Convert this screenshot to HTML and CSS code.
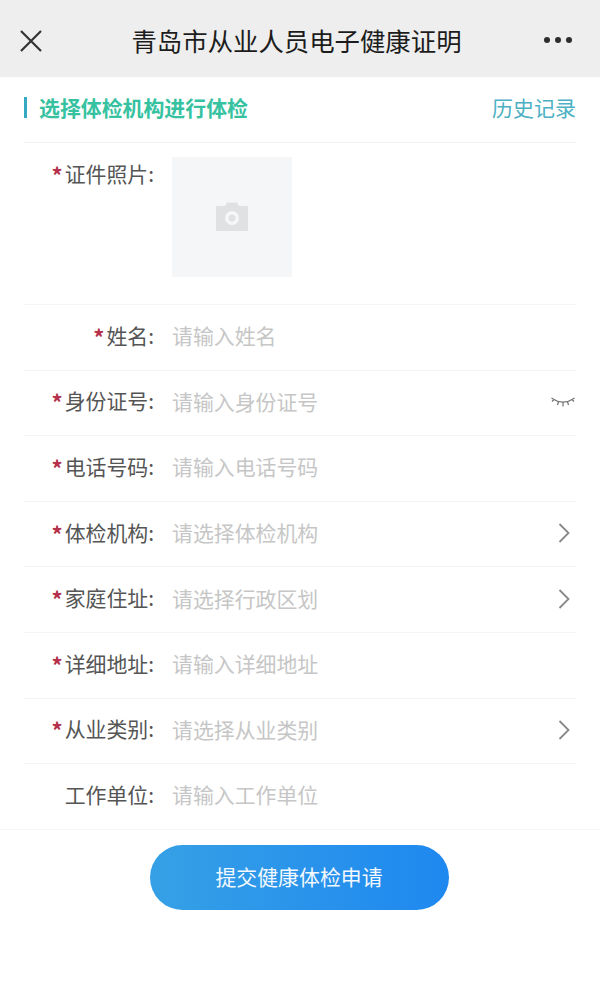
FILE: index.html
```html
<!DOCTYPE html>
<html lang="zh">
<head>
<meta charset="utf-8">
<title>青岛市从业人员电子健康证明</title>
<link rel="stylesheet" href="styles.css">
</head>
<body>
<header class="topbar">
  <svg class="close" width="24" height="24" viewBox="0 0 24 24"><path d="M2 2L22 22M22 2L2 22" fill="none" stroke="#333" stroke-width="2.2"/></svg>
  <h1 class="title">青岛市从业人员电子健康证明</h1>
  <div class="more"><i></i><i></i><i></i></div>
</header>
<section class="subhead">
  <h2 class="subtitle">选择体检机构进行体检</h2>
  <a class="history">历史记录</a>
</section>
<form class="form">
  <div class="row row-photo">
    <div class="label"><b>*</b>证件照片:</div>
    <div class="photo">
      <svg width="32" height="29" viewBox="0 0 32 29"><path d="M1 4h8l2-3.500h10l2 3.500h8a1 1 0 0 1 1 1v23a1 1 0 0 1-1 1h-30a1 1 0 0 1-1-1v-23a1 1 0 0 1 1-1z" fill="#dfe1e3"/><circle cx="16" cy="16" r="7" fill="#f4f6f8"/><circle cx="16" cy="16" r="3.500" fill="#dfe1e3"/></svg>
    </div>
  </div>
  <div class="row"><div class="label"><b>*</b>姓名:</div><div class="value">请输入姓名</div></div>
  <div class="row"><div class="label"><b>*</b>身份证号:</div><div class="value">请输入身份证号</div>
    <svg class="eye" width="24" height="12" viewBox="0 0 24 12"><path d="M3 3.500C8 7 16 7 21 3.500M3 3.500L.5 2M3 3.500L1 5.500M21 3.500L23.500 2M21 3.500L23 5.500M7.500 5.800L6.500 9M12 6.500V10.500M16.500 5.800L17.500 9" fill="none" stroke="#707070" stroke-width="1.200"/></svg>
  </div>
  <div class="row"><div class="label"><b>*</b>电话号码:</div><div class="value">请输入电话号码</div></div>
  <div class="row"><div class="label"><b>*</b>体检机构:</div><div class="value">请选择体检机构</div>
    <svg class="chev" width="12" height="20" viewBox="0 0 12 20"><path d="M1.500 1L10.500 10L1.500 19" fill="none" stroke="#888" stroke-width="1.800"/></svg>
  </div>
  <div class="row"><div class="label"><b>*</b>家庭住址:</div><div class="value">请选择行政区划</div>
    <svg class="chev" width="12" height="20" viewBox="0 0 12 20"><path d="M1.500 1L10.500 10L1.500 19" fill="none" stroke="#888" stroke-width="1.800"/></svg>
  </div>
  <div class="row"><div class="label"><b>*</b>详细地址:</div><div class="value">请输入详细地址</div></div>
  <div class="row"><div class="label"><b>*</b>从业类别:</div><div class="value">请选择从业类别</div>
    <svg class="chev" width="12" height="20" viewBox="0 0 12 20"><path d="M1.500 1L10.500 10L1.500 19" fill="none" stroke="#888" stroke-width="1.800"/></svg>
  </div>
  <div class="row row-last"><div class="label">工作单位:</div><div class="value">请输入工作单位</div></div>
</form>
<div class="actions"><button class="submit" type="button">提交健康体检申请</button></div>
</body>
</html>
```
FILE: styles.css
```css
* { box-sizing: border-box; }
html, body { margin: 0; padding: 0; }
body {
  width: 600px;
  height: 986px;
  overflow: hidden;
  background: #fff;
  font-family: "Noto Sans CJK SC", "Liberation Sans", sans-serif;
  color: #555;
}
.topbar {
  height: 77px;
  background: #eeeeee;
  display: flex;
  align-items: center;
  justify-content: space-between;
  padding: 4px 28px 0 19px;
}
.close { flex: none; margin-top: 1px; }
.title {
  margin: 0;
  font-size: 25.400px;
  font-weight: 400;
  color: #1c1c1c;
  line-height: 1;
  position: relative;
  left: 3px;
}
.more { display: flex; gap: 5px; margin-top: -2px; }
.more i { width: 6px; height: 6px; border-radius: 50%; background: #2c2c2c; }
.subhead {
  height: 66px;
  margin: 0 24px;
  padding-bottom: 5px;
  display: flex;
  align-items: center;
  justify-content: space-between;
  border-bottom: 1px solid #f3f3f3;
}
.subtitle {
  margin: 0;
  font-size: 20.900px;
  font-weight: 700;
  color: #36c2a0;
  line-height: 21px;
  border-left: 3px solid #35a9c2;
  padding-left: 12px;
}
.history { font-size: 21px; color: #4db0c4; }
.form { border-bottom: 1px solid #f5f5f5; }
.row {
  height: 65.600px;
  margin: 0 24px;
  padding-bottom: 4px;
  display: flex;
  align-items: center;
  border-bottom: 1px solid #f4f4f4;
  font-size: 20.900px;
}
.row-photo { height: 162px; align-items: flex-start; padding: 14px 0 0; }
.row-last { border-bottom: none; height: 64.600px; }
.label {
  width: 130px;
  flex: none;
  text-align: right;
  color: #555;
  line-height: 32px;
}
.label b {
  color: #b5304a;
  font-weight: 700;
  font-size: 22px;
  vertical-align: -2px;
  margin-right: 2px;
}
.value { flex: 1; margin-left: 18px; color: #c6c6c6; }
.photo {
  margin-left: 18px;
  width: 120px;
  height: 120px;
  padding-bottom: 2px;
  background: #f4f6f8;
  display: flex;
  align-items: center;
  justify-content: center;
}
.eye { flex: none; margin-right: 1px; margin-top: 2px; }
.chev { flex: none; margin-right: 6px; margin-top: 2px; }
.actions { display: flex; justify-content: center; padding: 15px 2px 0 0; }
.submit {
  width: 299px;
  height: 65px;
  border: none;
  border-radius: 33px;
  background: linear-gradient(90deg, #36a0e6, #1e88f0);
  color: #f2f8fd;
  font-family: inherit;
  font-size: 20.900px;
  padding: 0 0 2px;
}
```
